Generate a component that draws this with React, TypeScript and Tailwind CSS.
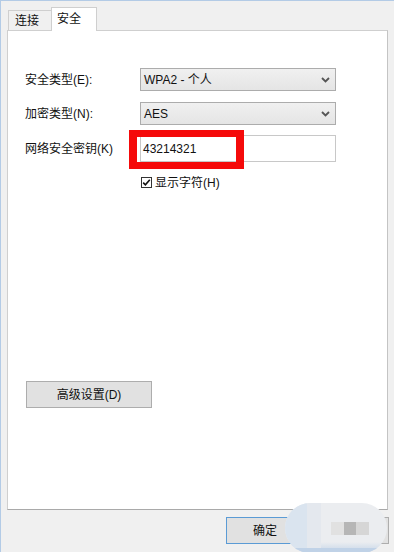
import React from "react";

const font = { fontFamily: '"Liberation Sans", "Noto Sans CJK SC", sans-serif' };

function Chevron() {
  return (
    <svg width="9" height="6" viewBox="0 0 9 6" className="shrink-0">
      <path d="M1 1 L4.5 4.5 L8 1" fill="none" stroke="#555" strokeWidth="1.8" />
    </svg>
  );
}

function Select({ value }: { value: string }) {
  return (
    <div className="w-[196px] h-[23px] border border-[#acacac] bg-[linear-gradient(to_bottom,#f0f0f0,#e5e5e5)] flex items-center pl-[3px] pr-[5px]">
      <span className="flex-1 text-[12px] text-[#111] leading-none">{value}</span>
      <Chevron />
    </div>
  );
}

export default function App() {
  return (
    <div
      className="w-[394px] h-[552px] bg-[#f0f0f0] relative overflow-hidden border-l border-t border-[#b3cbe6] flex flex-col text-[#111]"
      style={font}
    >
      {/* tabs */}
      <div className="flex items-end h-[29px] pl-[7px] relative z-10">
        <div className="h-[20px] w-[43px] border-t border-l border-[#cfcfcf] bg-[#f0f0f0] flex items-center pl-[6px] text-[12px] leading-none">
          连接
        </div>
        <div className="h-[24px] w-[46px] -mb-px bg-white border-t border-l border-r border-[#cfcfcf] flex items-center pl-[5px] pb-[2px] text-[12px] leading-none">
          安全
        </div>
      </div>

      {/* panel */}
      <div className="ml-[6px] w-[381px] h-[480px] bg-white border border-[#cfcfcf] border-b-[#a9a9a9] border-r-[#c4c4c4] flex flex-col pl-[17px] pt-[37px] relative">
        <div className="flex items-center h-[23px]">
          <span className="w-[115px] text-[12px]">安全类型(E):</span>
          <Select value="WPA2 - 个人" />
        </div>
        <div className="flex items-center h-[23px] mt-[11px]">
          <span className="w-[115px] text-[12px]">加密类型(N):</span>
          <Select value="AES" />
        </div>
        <div className="flex items-center h-[27px] mt-[10px]">
          <span className="w-[115px] text-[12px]">网络安全密钥(K)</span>
          <div className="relative w-[196px] h-[27px] border border-[#c8c8c8] bg-white flex items-center pl-[2px]">
            <span className="text-[12px] leading-none relative z-10">43214321</span>
            <div className="absolute left-[-12px] top-[-6px] w-[115px] h-[39px] border-[8px] border-t-[7px] border-b-[7px] border-[#f50a0a]" />
          </div>
        </div>
        <div className="flex items-center h-[13px] mt-[14px] pl-[116px] gap-[3px]">
          <div className="w-[11px] h-[11px] border border-[#333] bg-white flex items-center justify-center">
            <svg width="9" height="9" viewBox="0 0 9 9">
              <path d="M1.2 4.6 L3.4 6.8 L7.8 1.8" fill="none" stroke="#111" strokeWidth="1.6" />
            </svg>
          </div>
          <span className="text-[12px] leading-none">显示字符(H)</span>
        </div>
        <div className="mt-[192px] ml-[1px] w-[126px] h-[27px] border border-[#adadad] bg-[#e1e1e1] flex items-center justify-center text-[12px]">
          高级设置(D)
        </div>
      </div>

      {/* bottom buttons */}
      <div className="flex justify-end gap-[7px] pr-[5px] mt-[7px]">
        <div className="w-[78px] h-[27px] border border-[#5b9bd5] bg-[#e1e1e1] flex items-center justify-center text-[12px]">
          确定
        </div>
        <div className="w-[78px] h-[27px] border border-[#adadad] bg-[#e1e1e1] flex items-center justify-center text-[12px]">
          取消
        </div>
      </div>

      {/* blurred mosaic blob */}
      <div className="absolute left-[284px] top-[502px] w-[102px] h-[50px] rounded-[26px] overflow-hidden bg-[linear-gradient(to_bottom,#ebedf0_0%,#ebedf0_78%,#c3d4e8_100%)] z-20">
        <div className="absolute left-0 top-0 w-[22px] h-full bg-[#dae4ef]" />
        <div className="absolute left-[22px] top-0 w-[14px] h-full bg-[#e4e8ee]" />
        <div className="absolute left-[46px] top-[19px] w-[13px] h-[13px] bg-[#e1e1e1]" />
        <div className="absolute left-[59px] top-[19px] w-[12px] h-[13px] bg-[#b6b6b6]" />
        <div className="absolute left-[71px] top-[19px] w-[13px] h-[13px] bg-[#d6d6d6]" />
        <div className="absolute left-0 bottom-0 w-full h-[5px] bg-[#c0d2e7]" />
      </div>
    </div>
  );
}
